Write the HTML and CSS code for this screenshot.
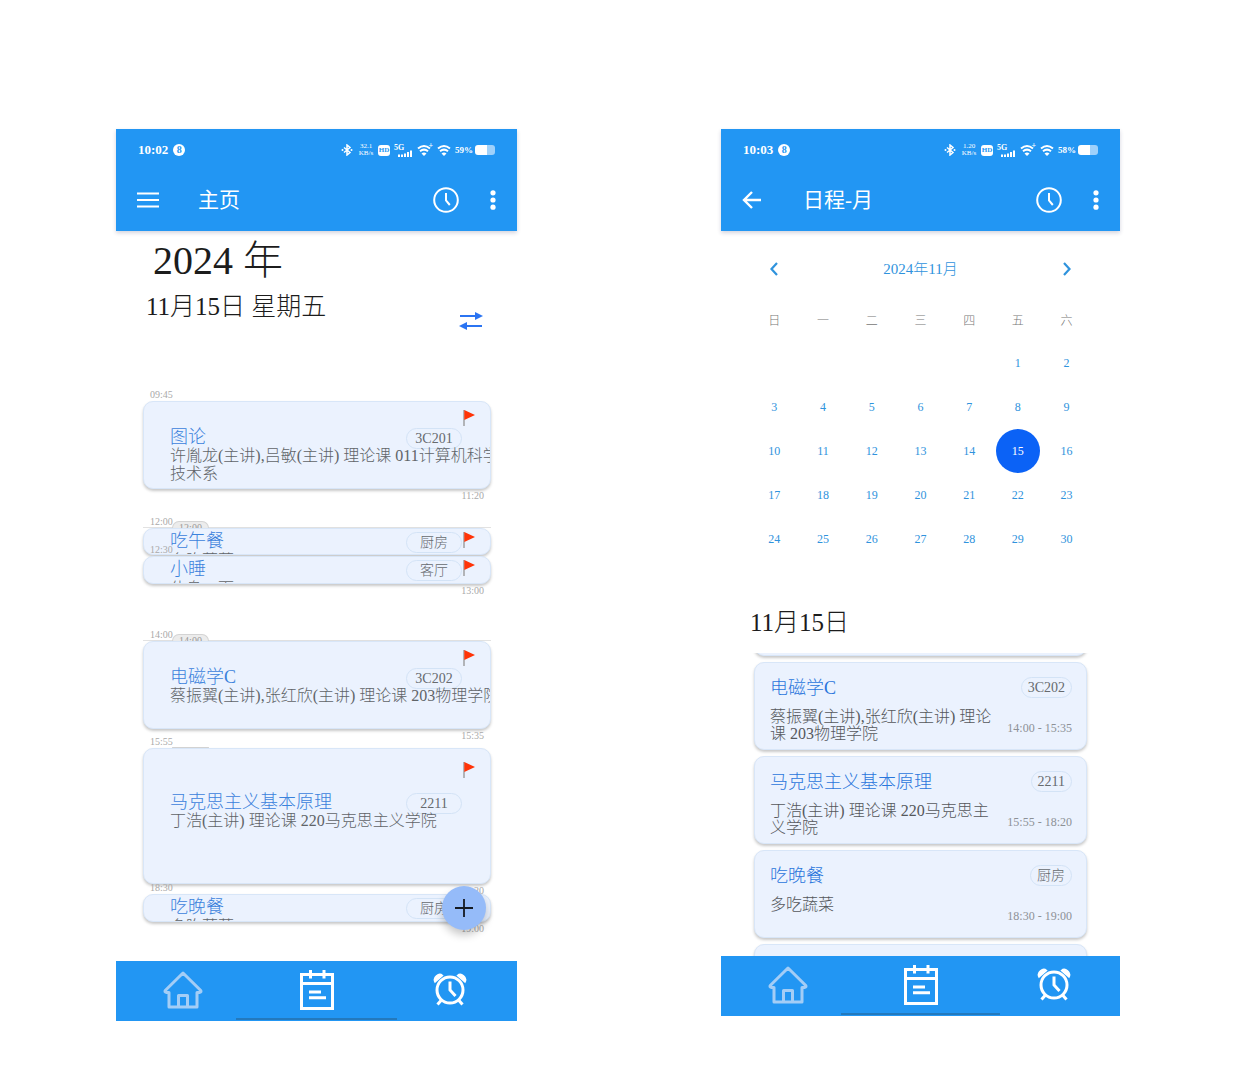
FILE: index.html
```html
<!DOCTYPE html>
<html lang="zh-CN">
<head>
<meta charset="utf-8">
<meta name="viewport" content="width=device-width, initial-scale=1">
<title>日程</title>
<link rel="stylesheet" href="styles.css">
</head>
<body>
<svg class="sprite" aria-hidden="true">
  <symbol id="bluetooth" viewBox="0 0 12 12"><path d="M3 3.500l6 5-3 2.500v-10l3 2.500-6 5" fill="none" stroke="currentColor" stroke-width="1.500"/><circle cx="1.500" cy="6" r="1" fill="currentColor"/><circle cx="10.500" cy="6" r="1" fill="currentColor"/></symbol>
  <symbol id="signal" viewBox="0 0 14 7"><path d="M1 7V4.500M4 7V4.500M7 7V3.500M10 7V2M13 7V0.500" stroke="currentColor" stroke-width="2"/></symbol>
  <symbol id="wifi" viewBox="0 0 15 12"><g fill="none" stroke="currentColor" stroke-width="2"><path d="M1 4.500q6-5 12 0M3 7.300q4-3.400 8 0"/></g><path d="M4.500 9.500q2.500-2 5 0L7 12z" fill="currentColor"/></symbol>
  <symbol id="clock" viewBox="0 0 26 26"><circle cx="13" cy="13" r="11.800"/><path d="M13 6v7.500l3.800 4.500"/></symbol>
  <symbol id="dots" viewBox="0 0 16 20"><circle cx="8" cy="2.800" r="2.600"/><circle cx="8" cy="10" r="2.600"/><circle cx="8" cy="17.200" r="2.600"/></symbol>
  <symbol id="flag" viewBox="0 0 12 17"><path d="M1 1v16" stroke="#9a9a9a" stroke-width="1.400"/><path d="M1.300 1L12 6 1.300 11z" fill="#ff3408"/></symbol>
  <symbol id="home" viewBox="0 0 40 40"><path d="M6 22.500H3.500q-2.500-.5-1-2.300L20 3l17.500 17.200q1.500 1.800-1 2.300H34V37H6z M15.500 37V25.500h9V37" stroke-linejoin="round"/></symbol>
  <symbol id="calendar" viewBox="0 0 36 40"><path d="M2.500 4.500h31v34h-31zM2.500 13.500h31M11.500 0v8.500M25 0v8.500M10 22h12M10 27.700h17"/></symbol>
  <symbol id="alarm" viewBox="0 0 34 34"><circle cx="17" cy="17" r="13"/><path d="M17 8.500v8.500l5.500 6M8.500 27l-4 4.500M25.500 27l4 4.500"/><path d="M2 9C-.5 4 6-.5 9.500 2.500zM32 9C34.500 4 28-.5 24.500 2.500z" fill="currentColor" stroke-width="1.500"/></symbol>
</svg>

<main class="stage">
  <section class="phone phone--day">
    <header class="top">
      <div class="status">
        <span class="status__time">10:02</span><span class="status__badge">8</span>
        <svg class="icon-bt"><use href="#bluetooth"/></svg>
        <span class="speed">32.1<br>KB/s</span>
        <span class="hd">HD</span>
        <span class="cell">5G<svg><use href="#signal"/></svg></span>
        <span class="wifi wifi--plus"><svg><use href="#wifi"/></svg></span>
        <span class="wifi"><svg><use href="#wifi"/></svg></span>
        <span class="percent">59%</span><span class="battery"></span>
      </div>
      <div class="bar">
        <button class="bar__lead" aria-label="菜单"><svg width="22" height="16" viewBox="0 0 22 16"><path d="M0 1.500h22M0 8h22M0 14.500h22" stroke="currentColor" stroke-width="2.200"/></svg></button>
        <h1 class="bar__title">主页</h1>
        <button class="bar__clock" aria-label="时间"><svg><use href="#clock"/></svg></button>
        <button class="bar__more" aria-label="更多"><svg><use href="#dots"/></svg></button>
      </div>
    </header>
    <div class="day">
      <div class="day__head">
        <div>
          <p class="day__year">2024 年</p>
          <p class="date">11月15日 星期五</p>
        </div>
        <button class="swap" aria-label="切换"><svg width="24" height="20" viewBox="0 0 24 20"><path d="M1 5h17M6 15h17" stroke="currentColor" stroke-width="2"/><path d="M16 1l8 4-8 4zM8 11l-8 4 8 4z" fill="currentColor"/></svg></button>
      </div>
      <ol class="timeline">
        <li class="slot" style="height:88px">
          <time class="slot__start">09:45</time>
          <article class="event">
            <div class="event__row"><h2 class="event__title">图论</h2><span class="pill">3C201</span></div>
            <p class="event__desc">许胤龙(主讲),吕敏(主讲) 理论课 011计算机科学<br>技术系</p>
            <svg class="flag"><use href="#flag"/></svg>
          </article>
          <time class="slot__end">11:20</time>
        </li>
        <li class="slot slot--ruled" style="height:28px;margin-top:38px">
          <time class="slot__start">12:00</time><span class="tab">12:00</span>
          <article class="event event--short">
            <div class="event__row"><h2 class="event__title">吃午餐</h2><span class="pill">厨房</span></div>
            <p class="event__desc">多吃蔬菜</p>
            <svg class="flag"><use href="#flag"/></svg>
          </article>
        </li>
        <li class="slot" style="height:28px;margin-top:1px">
          <time class="slot__start">12:30</time>
          <article class="event event--short">
            <div class="event__row"><h2 class="event__title">小睡</h2><span class="pill">客厅</span></div>
            <p class="event__desc">休息一下</p>
            <svg class="flag"><use href="#flag"/></svg>
          </article>
          <time class="slot__end">13:00</time>
        </li>
        <li class="slot slot--ruled" style="height:89px;margin-top:56px">
          <time class="slot__start">14:00</time><span class="tab">14:00</span>
          <article class="event">
            <div class="event__row"><h2 class="event__title">电磁学C</h2><span class="pill">3C202</span></div>
            <p class="event__desc">蔡振翼(主讲),张红欣(主讲) 理论课 203物理学院</p>
            <svg class="flag"><use href="#flag"/></svg>
          </article>
          <time class="slot__end">15:35</time>
        </li>
        <li class="slot" style="height:136px;margin-top:19px">
          <time class="slot__start">15:55</time><span class="tab tab--low"></span>
          <article class="event event--long">
            <div class="event__row"><h2 class="event__title">马克思主义基本原理</h2><span class="pill">2211</span></div>
            <p class="event__desc">丁浩(主讲) 理论课 220马克思主义学院</p>
            <svg class="flag"><use href="#flag"/></svg>
          </article>
          <time class="slot__end">18:20</time>
        </li>
        <li class="slot" style="height:28px;margin-top:10px">
          <time class="slot__start">18:30</time>
          <article class="event event--short">
            <div class="event__row"><h2 class="event__title">吃晚餐</h2><span class="pill">厨房</span></div>
            <p class="event__desc">多吃蔬菜</p>
            <svg class="flag"><use href="#flag"/></svg>
          </article>
          <time class="slot__end">19:00</time>
        </li>
      </ol>
      <button class="fab" aria-label="添加"><svg width="20" height="20" viewBox="0 0 20 20"><path d="M10 1v18M1 10h18" stroke="#151a22" stroke-width="1.800"/></svg></button>
    </div>
    <nav class="tabs">
      <a class="tabs__item tabs__item--on" href="#" aria-label="主页"><svg class="i-home"><use href="#home"/></svg></a>
      <a class="tabs__item" href="#" aria-label="日程"><svg class="i-cal"><use href="#calendar"/></svg></a>
      <a class="tabs__item" href="#" aria-label="闹钟"><svg class="i-alarm"><use href="#alarm"/></svg></a>
    </nav>
  </section>

  <section class="phone phone--month">
    <header class="top">
      <div class="status">
        <span class="status__time">10:03</span><span class="status__badge">8</span>
        <svg class="icon-bt"><use href="#bluetooth"/></svg>
        <span class="speed">1.20<br>KB/s</span>
        <span class="hd">HD</span>
        <span class="cell">5G<svg><use href="#signal"/></svg></span>
        <span class="wifi wifi--plus"><svg><use href="#wifi"/></svg></span>
        <span class="wifi"><svg><use href="#wifi"/></svg></span>
        <span class="percent">58%</span><span class="battery"></span>
      </div>
      <div class="bar">
        <button class="bar__lead" aria-label="返回"><svg width="20" height="18" viewBox="0 0 20 18"><path d="M19 9H3M10 1L2 9l8 8" fill="none" stroke="currentColor" stroke-width="2.400"/></svg></button>
        <h1 class="bar__title">日程-月</h1>
        <button class="bar__clock" aria-label="时间"><svg><use href="#clock"/></svg></button>
        <button class="bar__more" aria-label="更多"><svg><use href="#dots"/></svg></button>
      </div>
    </header>
    <div class="month">
      <div class="month__nav">
        <button aria-label="上个月"><svg width="8" height="14" viewBox="0 0 8 14"><path d="M7 1L1.500 7 7 13" fill="none" stroke="currentColor" stroke-width="2.200"/></svg></button>
        <h2>2024年11月</h2>
        <button aria-label="下个月"><svg width="8" height="14" viewBox="0 0 8 14"><path d="M1 1l5.500 6L1 13" fill="none" stroke="currentColor" stroke-width="2.200"/></svg></button>
      </div>
      <table class="grid">
        <thead><tr><th>日</th><th>一</th><th>二</th><th>三</th><th>四</th><th>五</th><th>六</th></tr></thead>
        <tbody>
          <tr><td></td><td></td><td></td><td></td><td></td><td>1</td><td>2</td></tr>
          <tr><td>3</td><td>4</td><td>5</td><td>6</td><td>7</td><td>8</td><td>9</td></tr>
          <tr><td>10</td><td>11</td><td>12</td><td>13</td><td>14</td><td><span class="today">15</span></td><td>16</td></tr>
          <tr><td>17</td><td>18</td><td>19</td><td>20</td><td>21</td><td>22</td><td>23</td></tr>
          <tr><td>24</td><td>25</td><td>26</td><td>27</td><td>28</td><td>29</td><td>30</td></tr>
        </tbody>
      </table>
      <h2 class="date month__date">11月15日</h2>
      <ul class="agenda">
        <li class="card"></li>
        <li class="card">
          <h3 class="event__title">电磁学C</h3><span class="pill">3C202</span>
          <p class="card__desc">蔡振翼(主讲),张红欣(主讲) 理论课 203物理学院</p><span class="card__time">14:00 - 15:35</span>
        </li>
        <li class="card">
          <h3 class="event__title">马克思主义基本原理</h3><span class="pill">2211</span>
          <p class="card__desc">丁浩(主讲) 理论课 220马克思主义学院</p><span class="card__time">15:55 - 18:20</span>
        </li>
        <li class="card">
          <h3 class="event__title">吃晚餐</h3><span class="pill">厨房</span>
          <p class="card__desc">多吃蔬菜</p><span class="card__time">18:30 - 19:00</span>
        </li>
        <li class="card"></li>
      </ul>
    </div>
    <nav class="tabs">
      <a class="tabs__item tabs__item--on" href="#" aria-label="主页"><svg class="i-home"><use href="#home"/></svg></a>
      <a class="tabs__item" href="#" aria-label="日程"><svg class="i-cal"><use href="#calendar"/></svg></a>
      <a class="tabs__item" href="#" aria-label="闹钟"><svg class="i-alarm"><use href="#alarm"/></svg></a>
    </nav>
  </section>
</main>
</body>
</html>
```

FILE: styles.css
```css
* { box-sizing: border-box; margin: 0; padding: 0; }
body {
  background: #fff;
  color: #1c1c1c;
  font-family: "Liberation Serif", "Noto Sans CJK SC", serif;
  font-weight: 300;
}
h1, h2, h3 { font-weight: 300; }
ol, ul { list-style: none; }
button { border: 0; background: none; color: inherit; font: inherit; cursor: pointer; }
svg { display: block; }
.sprite { position: absolute; width: 0; height: 0; }

.stage {
  display: grid;
  grid-template-columns: 116fr 401fr 204fr 399fr 130fr;
  align-items: start;
  padding: 129px 0 59px;
}
.phone { min-width: 0; background: #fff; }
.phone--day { grid-column: 2; }
.phone--month { grid-column: 4; }

/* Status bar and app bar */
.top { background: #2296f3; color: #fff; box-shadow: 0 2px 4px rgba(40, 40, 90, .2); }
.status { display: flex; align-items: center; height: 42px; padding: 0 22px; font-weight: 700; }
.status__time { font-size: 13px; }
.status__badge {
  width: 12px; height: 12px; margin: 0 auto 0 5px; border-radius: 50%;
  background: #fff; color: #2296f3; font-size: 10px; line-height: 12px; text-align: center;
}
.icon-bt { width: 12px; height: 12px; }
.speed { width: 16px; margin-left: 5px; font-size: 7px; line-height: 7px; text-align: center; font-weight: 400; }
.hd {
  width: 12px; height: 11px; margin-left: 4px; border-radius: 3px;
  background: #fff; color: #2296f3; font-size: 7px; line-height: 11px; text-align: center;
}
.cell { position: relative; width: 18px; height: 13px; margin-left: 4px; font-size: 8px; line-height: 8px; }
.cell svg { position: absolute; right: 0; bottom: 0; width: 14px; height: 7px; }
.wifi { position: relative; margin-left: 5px; }
.wifi svg { width: 15px; height: 12px; }
.wifi--plus::after { content: "+"; position: absolute; right: -1px; top: -2px; font-size: 8px; line-height: 8px; }
.percent { margin-left: 3px; font-size: 9px; }
.battery {
  width: 20px; height: 10px; margin-left: 2px; border-radius: 3px;
  background: linear-gradient(90deg, #fff 58%, #9fd1fb 58%);
}
.bar { display: flex; align-items: center; height: 60px; padding: 0 16px 2px 20px; }
.bar__lead { width: 62px; padding-left: 1px; }
.bar__title { flex: 1; font-size: 21px; line-height: 24px; font-weight: 400; }
.bar__clock svg { width: 26px; height: 26px; fill: none; stroke: currentColor; stroke-width: 2; }
.bar__more { margin-left: 26px; }
.bar__more svg { width: 16px; height: 20px; fill: currentColor; }

/* Day view */
.day { position: relative; height: 730px; padding: 0 26px 0 27px; }
.day__head { display: flex; justify-content: space-between; height: 170px; padding: 7px 8px 0 3px; }
.day__year { padding-left: 7px; font-size: 40px; line-height: 46px; }
.date { font-size: 25px; line-height: 46px; }
.swap { align-self: flex-start; margin-top: 73px; color: #2b74f2; }
.slot { position: relative; }
.slot--ruled { border-top: 1px solid #e2e2e2; }
.slot__start, .slot__end { position: absolute; z-index: 1; color: #a9a9a9; font-size: 10px; line-height: 12px; }
.slot__start { left: 7px; top: -12px; }
.slot__end { right: 7px; bottom: -13px; }
.tab {
  position: absolute; top: -7px; left: 29px; width: 37px; height: 7px; overflow: hidden;
  border: 1px solid #d4d4d4; border-bottom: 0; border-radius: 10px 10px 0 0;
  background: #ececec; color: #999; font-size: 10px; line-height: 12px; text-align: center;
}
.tab--low { top: -1px; height: 1px; }
.event, .card {
  border: 1px solid #d8e6f8;
  border-radius: 10px;
  background: #ebf2fe;
  box-shadow: 0 2px 3px rgba(0, 0, 0, .22);
}
.event { position: relative; height: 100%; padding: 26px 0 0 26px; overflow: hidden; }
.event--short { padding-top: 3px; }
.event--long { padding-top: 44px; }
.event__row { display: flex; justify-content: space-between; height: 19px; padding-right: 28px; }
.event__title { color: #3b82dc; font-size: 18px; line-height: 19px; }
.event .pill { width: 56px; }
.event__desc { color: #606468; font-size: 16px; line-height: 18px; white-space: nowrap; }
.event--short .event__desc { padding-top: 1px; }
.pill {
  height: 21px; padding: 0 6px; border: 1px solid #d3e3f6; border-radius: 11px;
  color: #666a6e; font-size: 14px; line-height: 19px; text-align: center;
}
.flag { position: absolute; right: 15px; top: 7px; width: 12px; height: 17px; }
.event--short .flag { top: 2px; }
.event--long .flag { top: 12px; }
.fab {
  position: absolute; right: 31px; bottom: 31px; z-index: 2;
  display: grid; place-items: center; width: 44px; height: 44px; border-radius: 50%;
  background: #95bbf9; box-shadow: 0 5px 8px rgba(0, 0, 0, .22);
}

/* Month view */
.month__nav { display: flex; align-items: center; justify-content: space-between; height: 76px; padding: 0 49px; color: #2f93dd; }
.month__nav h2 { padding-bottom: 3px; font-size: 15px; }
.grid { width: calc(100% - 58px); margin: 0 29px; table-layout: fixed; border-collapse: collapse; text-align: center; }
.grid th { height: 34px; padding-bottom: 6px; color: #777; font-size: 12px; line-height: 28px; font-weight: 300; }
.grid td { height: 44px; color: #2f93dd; font-size: 12px; }
.today { display: block; width: 44px; margin: 0 auto; border-radius: 50%; background: #0b62f6; color: #fff; line-height: 44px; }
.month__date { padding: 39px 29px 7px; }
.agenda { display: flex; flex-direction: column; gap: 6px; height: 303px; padding: 0 33px; overflow: hidden; }
.card {
  display: grid; flex: none; grid-template-columns: 224px auto; grid-template-rows: 21px 1fr;
  justify-content: space-between; row-gap: 10px; height: 88px; padding: 14px 14px 0 15px;
}
.card:first-child { margin-top: -85px; }
.card .event__title { line-height: 22px; color: #2a76dc; }
.card .pill { justify-self: end; }
.card__desc { color: #55585c; font-size: 16px; line-height: 17px; }
.card__time { align-self: start; padding-top: 13px; color: #8d9196; font-size: 12px; line-height: 14px; white-space: nowrap; }

/* Bottom navigation */
.tabs { position: relative; display: flex; height: 60px; background: #2296f3; color: #fff; }
.tabs::after { content: ""; position: absolute; left: 30%; right: 30%; bottom: 1px; height: 2px; background: #2379bd; }
.tabs__item { display: grid; flex: 1; place-items: center; padding-bottom: 2px; color: inherit; }
.tabs__item--on { color: #a3cdf6; }
.tabs svg { fill: none; stroke: currentColor; stroke-width: 3; }
.i-home { width: 40px; height: 40px; }
.i-cal { width: 36px; height: 40px; }
.i-alarm { width: 34px; height: 34px; }
```
